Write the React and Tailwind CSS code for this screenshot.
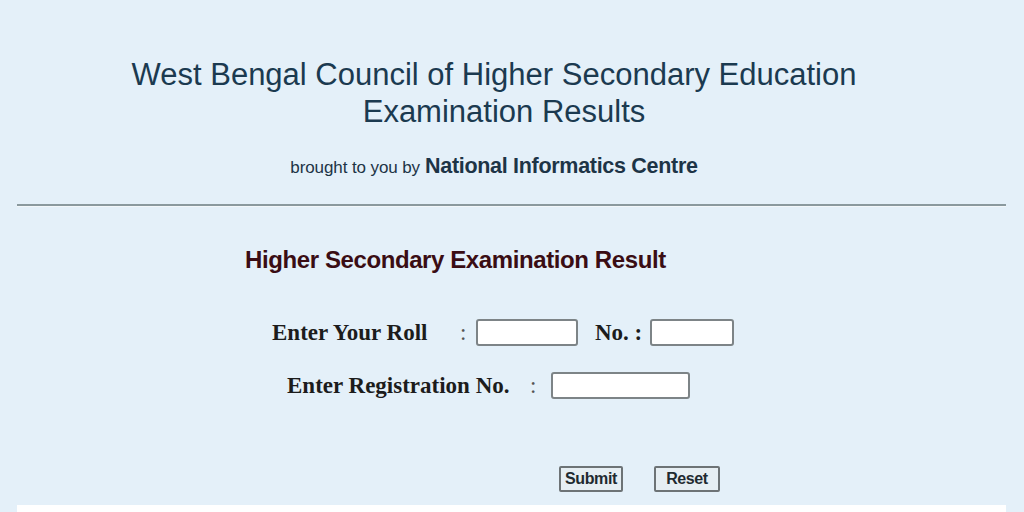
const serif = { fontFamily: '"Liberation Serif", "Times New Roman", serif' };

const TextBox = ({ width }) => (
    <input
        type="text"
        className="h-[27px] border-2 border-[#7d8487] rounded-[3px] bg-white outline-none"
        style={{ width }}
    />
);

const FormButton = ({ label, width }) => (
    <button
        className="h-[26px] border-2 border-[#6d7376] rounded-[2px] bg-[#e6eef3] text-[16px] font-bold text-[#1f2a30] leading-none tracking-[-0.4px]"
        style={{ width }}
    >
        {label}
    </button>
);

export default function App() {
    return (
        <div
            className="w-[1024px] h-[512px] overflow-hidden bg-[#e4f0f9] flex flex-col"
            style={{ fontFamily: '"Liberation Sans", Arial, sans-serif' }}
        >
            <header className="flex flex-col items-center pt-[56px] pr-[36px]">
                <h1 className="text-[31px] leading-[37px] text-[#1b3a50] text-center font-normal">
                    West Bengal Council of Higher Secondary Education
                    <br />
                    <span className="pl-[20px]">Examination Results</span>
                </h1>
                <p className="mt-[20px] text-[#1d3446] flex items-baseline gap-[5px]">
                    <span className="text-[17px] tracking-[-0.1px]">
                        brought to you by
                    </span>
                    <span className="text-[21.5px] font-bold tracking-[-0.3px]">
                        National Informatics Centre
                    </span>
                </p>
            </header>

            <hr className="mx-[17px] mt-[22px] w-[989px] h-[3px] border-0 border-t-[2px] border-t-[#8a999e] border-b border-b-[#f2f7fa]" />

            <section className="pl-[245px] pt-[39px]">
                <h2 className="text-[24px] leading-[28px] font-bold text-[#3a0d14] tracking-[-0.4px]">
                    Higher Secondary Examination Result
                </h2>
            </section>

            <form className="flex flex-col pt-[45px] gap-[26px] text-[#1c1c1c] font-bold text-[23px] leading-[27px]" style={serif}>
                <div className="flex items-center">
                    <span className="ml-[272px] w-[188px]">Enter Your Roll</span>
                    <span className="w-[16px] font-normal text-[#555]">:</span>
                    <TextBox width={102} />
                    <span className="ml-[17px] w-[55px]">No. :</span>
                    <TextBox width={84} />
                </div>
                <div className="flex items-center">
                    <span className="ml-[287px] w-[243px]">Enter Registration No.</span>
                    <span className="w-[21px] font-normal text-[#555]">:</span>
                    <TextBox width={139} />
                </div>
            </form>

            <div className="flex gap-[31px] pl-[559px] pt-[67px]">
                <FormButton label="Submit" width={64} />
                <FormButton label="Reset" width={66} />
            </div>

            <div className="mt-[13px] mx-[17px] w-[989px] flex-1 bg-white" />
        </div>
    );
}
